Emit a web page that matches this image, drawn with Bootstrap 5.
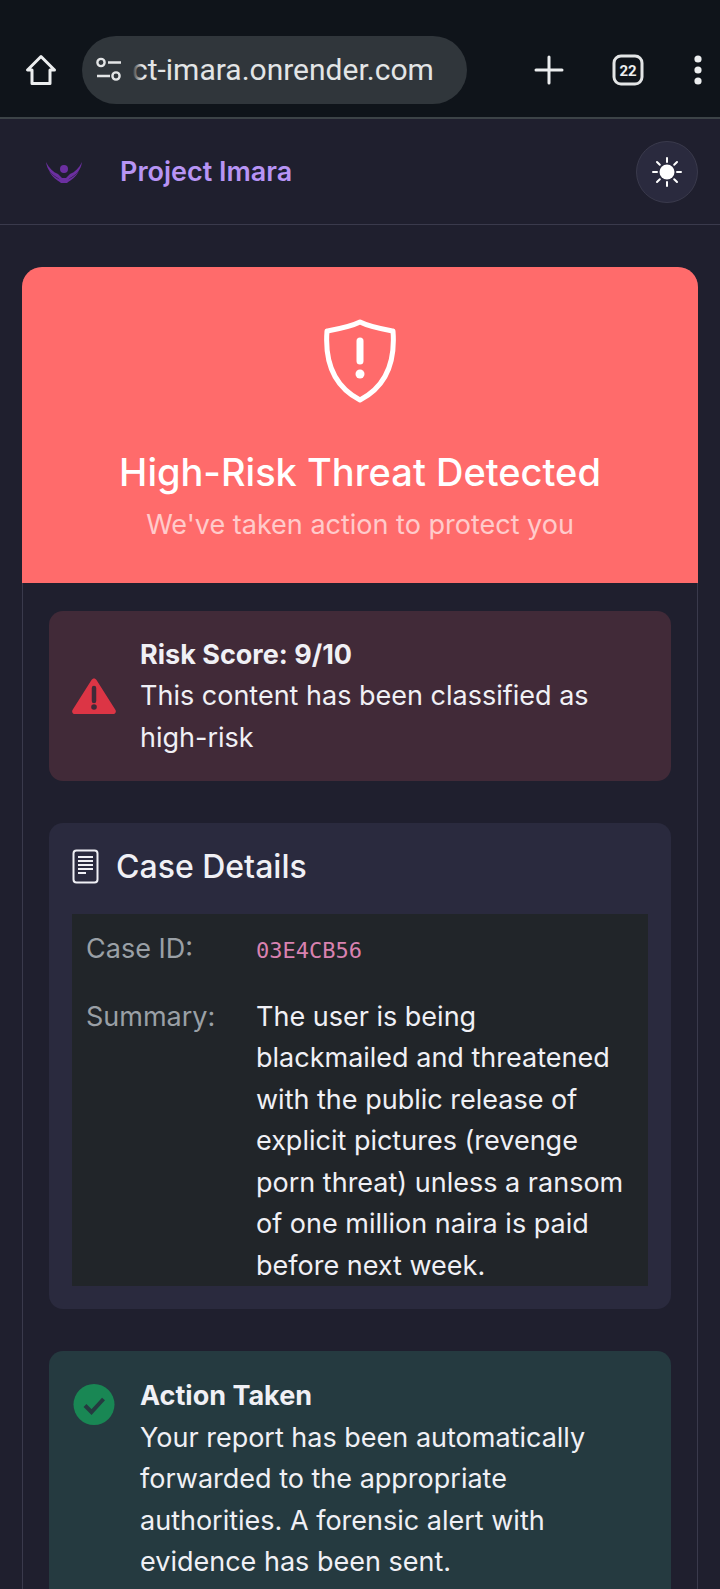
<!DOCTYPE html>
<html lang="en">
<head>
    <meta charset="UTF-8">
    <meta name="viewport" content="width=device-width, initial-scale=1.0">
    <title>Project Imara</title>
    <link href="https://cdn.jsdelivr.net/npm/bootstrap@5.3.0/dist/css/bootstrap.min.css" rel="stylesheet">
    <style>
        html, body { height: 1589px; overflow: hidden; }
        body { background: #1f1f2e; color: #f0f0f5; font-family: Inter, "Liberation Sans", sans-serif; font-size: 27px; line-height: 41.5px; }

        .chrome-bar { height: 119px; background: #0f141a; border-bottom: 2px solid #3c4347; padding: 36px 0 0 0; }
        .chrome-home { width: 82px; height: 68px; }
        .url-pill { width: 385px; height: 68px; background: #30363b; border-radius: 34px; padding-left: 14px; overflow: hidden; }
        .url-text { font-family: Roboto, "Liberation Sans", sans-serif; font-size: 30px; line-height: 68px; color: #e3e5e6; white-space: nowrap; }
        .url-fade { width: 14px; height: 68px; margin-left: 6px; margin-right: -14px; background: linear-gradient(90deg, #30363b 30%, rgba(48,54,59,0)); position: relative; }
        .chrome-slot { height: 68px; }

        .app-nav { height: 106px; background: #1f1f2e; border-bottom: 1px solid #3a3a4c; padding: 0 22px 0 46px; }
        .app-brand { color: #b794f4; font-size: 27px; font-weight: 600; margin-left: 38px; }
        .theme-btn { width: 62px; height: 62px; background: #2a2a3e; border: 1px solid #3a3a4c; border-radius: 50%; padding: 0; }

        .page-wrap { padding: 42px 22px 0; }
        .threat-card { background: #1f1f2e; border: 1px solid #3a3a4c; border-radius: 20px; }
        .threat-head { background: #ff6b6b; color: #fff; height: 316px; border-radius: 20px 20px 0 0; margin: -1px -1px 0; padding-top: 52px; }
        .threat-title { font-size: 38px; font-weight: 500; line-height: 46px; margin: 46px 0 0; }
        .threat-sub { font-size: 27px; line-height: 40px; opacity: .65; margin: 10px 0 0; }
        .threat-body { padding: 28px 26px 0; }

        .risk-box { background: #412a38; border-radius: 14px; padding: 22px 22px 22px 22px; height: 170px; margin-bottom: 42px; }
        .risk-icon { width: 46px; flex: none; margin-right: 23px; }
        .case-box { background: #2a2a3e; border-radius: 14px; padding: 22px 23px 23px; margin-bottom: 42px; }
        .case-title { font-size: 32px; font-weight: 500; line-height: 44px; margin: 0 0 25px; }
        .case-table { --bs-table-bg: #212529; --bs-table-color: #f0f0f5; margin: 0; }
        .case-table th { font-weight: 400; color: #9aa0a6; width: 171px; padding: 14px 0 12px 14px; vertical-align: top; }
        .case-table td { padding: 14px 14px 0 13px; }
        .case-table tr:last-child td { padding-bottom: 0; }
        .case-id { font-family: "DejaVu Sans Mono", monospace; font-size: 22px; color: #d982b0; }
        .action-box { background: #253a40; border-radius: 14px; padding: 24px 22px; }
        .action-icon { width: 46px; flex: none; margin-right: 23px; margin-top: 9px; }
    </style>
</head>
<body>
    <!-- Browser toolbar -->
    <div class="chrome-bar d-flex align-items-start">
        <div class="chrome-home d-flex align-items-center justify-content-center">
            <svg width="32" height="32" viewBox="0 0 32 32" fill="none" stroke="#eceeef" stroke-width="3" stroke-linejoin="round"><path d="M16 2.5 2.5 16H7v13.500h18V16h4.500z"/></svg>
        </div>
        <div class="url-pill d-flex align-items-center">
            <svg class="flex-none" width="26" height="26" viewBox="0 0 26 26" fill="none" stroke="#e3e5e6" stroke-width="2.400"><circle cx="5" cy="5.500" r="3.600"/><path d="M12 5.500h13M1 19h13"/><circle cx="20" cy="19" r="3.600"/></svg>
            <div class="url-fade"></div>
            <span class="url-text ms-1">ct-imara.onrender.com</span>
        </div>
        <div class="chrome-slot d-flex align-items-center ms-auto gap-5 pe-3">
            <svg width="30" height="30" viewBox="0 0 30 30" stroke="#eceeef" stroke-width="3" stroke-linecap="round"><path d="M15 2v26M2 15h26"/></svg>
            <svg width="32" height="32" viewBox="0 0 32 32"><rect x="2" y="2" width="28" height="28" rx="7" fill="none" stroke="#e3e5e6" stroke-width="3"/><text x="16" y="21.500" text-anchor="middle" font-family="Roboto, sans-serif" font-size="15" font-weight="700" fill="#eceeef">22</text></svg>
            <svg width="12" height="30" viewBox="0 0 12 30" fill="#eceeef"><circle cx="6" cy="4" r="3.600"/><circle cx="6" cy="15" r="3.600"/><circle cx="6" cy="26" r="3.600"/></svg>
        </div>
    </div>

    <!-- App navbar -->
    <nav class="app-nav d-flex align-items-center">
        <svg width="36" height="24" viewBox="0 0 36 24" fill="#6b2fa0">
            <circle cx="18" cy="9" r="4"/>
            <path d="M0 2c1 8 6 13 12 16l4 4h4l4-4c6-3 11-8 12-16-3 6-7 10-12 12l-4 4h-4l-4-4C7 12 3 8 0 2z"/>
            <path d="M3 11c3 6 8 9 12 12h6c4-3 9-6 12-12-4 5-8 7-12 9h-6c-4-2-8-4-12-9z"/>
        </svg>
        <span class="app-brand">Project Imara</span>
        <button class="theme-btn btn d-flex align-items-center justify-content-center ms-auto" type="button" aria-label="Toggle theme">
            <svg width="30" height="30" viewBox="0 0 30 30" stroke="#fff" stroke-width="2" stroke-linecap="round"><circle cx="15" cy="15" r="7.500" fill="#fff" stroke="none"/><path d="M15 1v4M15 25v4M1 15h4M25 15h4M5 5l2.800 2.800M22.200 22.200 25 25M5 25l2.800-2.800M22.200 7.800 25 5"/></svg>
        </button>
    </nav>

    <div class="page-wrap">
        <div class="threat-card">
            <div class="threat-head text-center">
                <svg width="74" height="84" viewBox="0 0 74 84" fill="none" stroke="#fff" stroke-width="5" stroke-linejoin="round"><path d="M37 3 C27 8 15 10 4 12 C2 38 8 66 37 81 C66 66 72 38 70 12 C59 10 47 8 37 3z"/><path d="M37 22v20" stroke-width="7" stroke-linecap="round"/><circle cx="37" cy="55" r="4.500" fill="#fff" stroke="none"/></svg>
                <h1 class="threat-title">High-Risk Threat Detected</h1>
                <p class="threat-sub">We've taken action to protect you</p>
            </div>
            <div class="threat-body">
                <div class="risk-box d-flex align-items-center">
                    <svg class="risk-icon" width="46" height="38" viewBox="0 0 46 38"><path d="M23 1.500c-1 0-2 .6-2.500 1.500L1.500 33c-1 1.800.2 4 2.300 4h38.400c2.100 0 3.300-2.200 2.300-4L25.500 3c-.5-.9-1.500-1.500-2.500-1.500z" fill="#dc3545"/><path d="M23 11v13" stroke="#412a38" stroke-width="4.500" stroke-linecap="round"/><circle cx="23" cy="30" r="2.800" fill="#412a38"/></svg>
                    <div>
                        <strong class="fw-bold d-block">Risk Score: 9/10</strong>
                        This content has been classified as high-risk
                    </div>
                </div>

                <div class="case-box">
                    <h2 class="case-title d-flex align-items-center">
                        <svg class="me-3" width="28" height="36" viewBox="0 0 28 36" fill="none" stroke="#f0f0f5" stroke-width="2"><rect x="1.500" y="1.500" width="24" height="32" rx="3"/><path d="M6 8h15M6 12h15M6 16h15M6 20h15M6 24h8"/></svg>
                        Case Details
                    </h2>
                    <table class="table table-borderless case-table">
                        <tbody>
                            <tr><th scope="row">Case ID:</th><td><span class="case-id">03E4CB56</span></td></tr>
                            <tr><th scope="row">Summary:</th><td>The user is being blackmailed and threatened with the public release of explicit pictures (revenge porn threat) unless a ransom of one million naira is paid before next week.</td></tr>
                        </tbody>
                    </table>
                </div>

                <div class="action-box d-flex">
                    <svg class="action-icon" width="41" height="41" viewBox="0 0 41 41"><circle cx="20.500" cy="20.500" r="20.500" fill="#198754"/><path d="M11.500 21.500l6.500 6.500 12-13" fill="none" stroke="#253a40" stroke-width="4"/></svg>
                    <div>
                        <strong class="fw-bold d-block">Action Taken</strong>
                        Your report has been automatically forwarded to the appropriate authorities. A forensic alert with evidence has been sent.
                    </div>
                </div>
            </div>
        </div>
    </div>

    <script src="https://cdn.jsdelivr.net/npm/bootstrap@5.3.0/dist/js/bootstrap.bundle.min.js"></script>
</body>
</html>
